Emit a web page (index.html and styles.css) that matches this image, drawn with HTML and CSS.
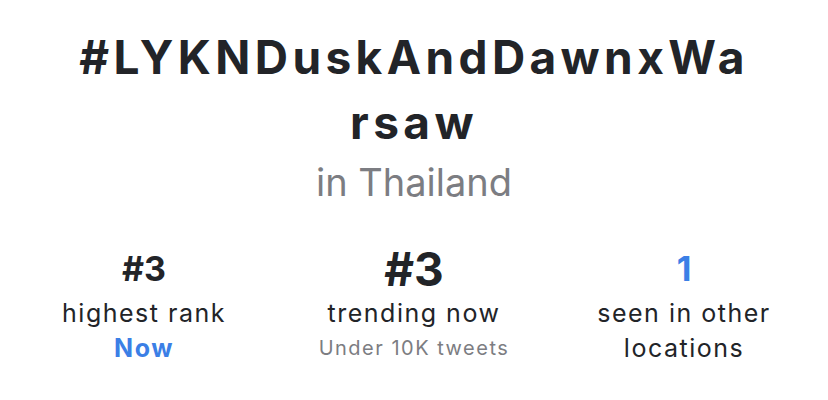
FILE: index.html
```html
<!DOCTYPE html>
<html lang="en">
<head>
<meta charset="utf-8">
<link rel="stylesheet" href="styles.css">
</head>
<body>
<main class="trend">
  <h1 class="title">#LYKNDuskAndDawnxWarsaw</h1>
  <p class="location">in Thailand</p>
  <section class="stats">
    <div class="stat">
      <div class="num">#3</div>
      <div class="label">highest rank</div>
      <div class="label accent">Now</div>
    </div>
    <div class="stat">
      <div class="num big">#3</div>
      <div class="label">trending now</div>
      <div class="label sub">Under 10K tweets</div>
    </div>
    <div class="stat">
      <div class="num accent">1</div>
      <div class="label">seen in other</div>
      <div class="label">locations</div>
    </div>
  </section>
</main>
</body>
</html>
```

FILE: styles.css
```css
html, body {
  margin: 0;
  padding: 0;
  background: #ffffff;
}
body {
  font-family: Inter, "Liberation Sans", sans-serif;
  color: #222428;
}
.trend {
  display: flex;
  flex-direction: column;
  align-items: center;
  padding-top: 25px;
}
.title {
  margin: 0;
  width: 676px;
  font-size: 46px;
  font-weight: 700;
  line-height: 65px;
  letter-spacing: 4.4px;
  text-align: center;
  word-break: break-all;
}
.location {
  margin: 5px 0 0;
  font-size: 38px;
  line-height: 45px;
  color: #7c7d82;
}
.stats {
  display: grid;
  grid-template-columns: repeat(3, 270px);
  margin-top: 40px;
}
.stat {
  display: flex;
  flex-direction: column;
  align-items: center;
  text-align: center;
}
.num {
  font-size: 34px;
  font-weight: 700;
  line-height: 48px;
  margin-bottom: 3px;
}
.num.big {
  font-size: 46px;
}
.label {
  font-size: 25px;
  line-height: 35px;
  letter-spacing: 1.5px;
}
.accent {
  color: #3b7fe6;
}
.label.accent {
  font-weight: 700;
}
.label.sub {
  font-size: 20px;
  letter-spacing: 1.5px;
  color: #7c7d82;
}
```
